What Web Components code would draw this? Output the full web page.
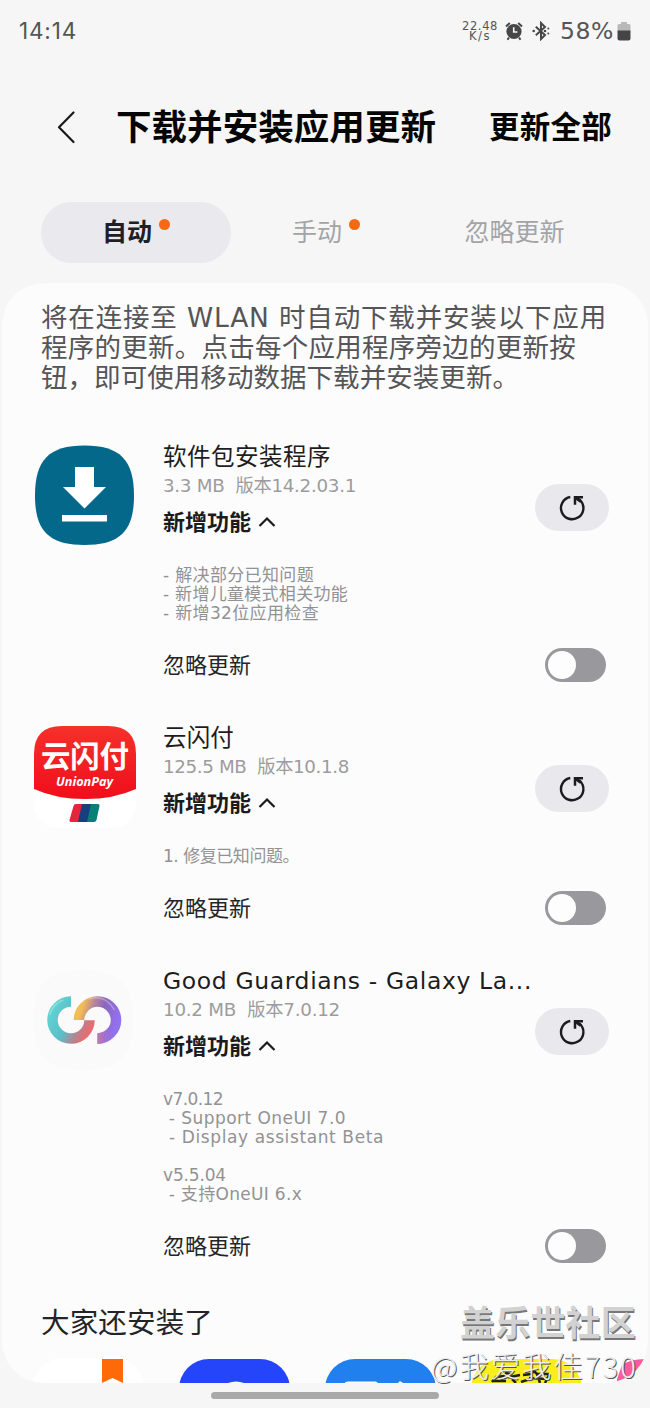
<!DOCTYPE html>
<html lang="zh-CN">
<head>
<meta charset="utf-8">
<title>下载并安装应用更新</title>
<style>
html,body{margin:0;background:#f6f6f6}
body{font-family:"DejaVu Sans","Noto Sans CJK SC",sans-serif;color:#1a1a1a}
</style>
</head>
<body>
<updates-screen></updates-screen>
<script>
const define = (name, html, ready) => customElements.define(name, class extends HTMLElement {
  connectedCallback() {
    if (this.shadowRoot) return;
    const root = this.attachShadow({mode: 'open'});
    const t = document.createElement('template');
    t.innerHTML = typeof html === 'function' ? html(this) : html;
    root.append(t.content.cloneNode(true));
    if (ready) ready(this, root);
  }
});

/* One line of text, tracked so that it takes exactly the width it is given. */
define('fit-text', '<style>:host{display:block;white-space:pre}span{display:inline-block;vertical-align:top}</style><span><slot></slot></span>', (el, root) => {
  const w = parseFloat(el.getAttribute('w'));
  const span = root.querySelector('span');
  const n = [...el.textContent].length;
  if (w && n > 1) span.style.letterSpacing = (w - span.getBoundingClientRect().width) / n + 'px';
});

define('status-bar', `<style>
:host{display:flex;height:62px;box-sizing:border-box;padding:0 19px 0 19px;align-items:center;color:#555}
.time{font-family:Inter,sans-serif;font-size:22.500px;margin-top:-2px;flex:1}
.net{font-size:11.500px;line-height:10px;width:36px;display:flex;flex-direction:column;align-items:center;margin-right:7px}
.pct{font-size:23.500px;margin-left:10px}
svg{display:block}
</style>
<fit-text class="time" w="58">14:14</fit-text>
<div class="net"><fit-text w="36">22.48</fit-text><fit-text w="22">K/s</fit-text></div>
<svg width="20" height="20" viewBox="0 0 20 20"><circle cx="9" cy="10.500" r="7.600" fill="#474747"/><path d="M1 5.500 4.800 2M17 5.500 13.200 2M4 16.500 2.500 18.800M14 16.500l1.500 2.300" stroke="#474747" stroke-width="2" fill="none"/><path d="M8.700 6.300v4.700h3.700" fill="none" stroke="#f6f6f6" stroke-width="1.600"/></svg>
<svg style="margin-left:7px" width="18" height="20" viewBox="0 0 18 20"><path d="M3.800 5.800 13 14 9 18V2L13 6 3.800 14.200" fill="none" stroke="#474747" stroke-width="2"/><circle cx="1.700" cy="10" r="1.300" fill="#474747"/><circle cx="13" cy="10" r="1.300" fill="#474747"/><circle cx="16.300" cy="7.500" r="1" fill="#474747"/><circle cx="16.300" cy="12.500" r="1" fill="#474747"/></svg>
<fit-text class="pct" w="54">58%</fit-text>
<svg style="margin-left:3px" width="14" height="20" viewBox="0 0 14 20"><path d="M4 1h6v2h2q1.500 0 1.500 1.500V10H.5V4.500Q.5 3 2 3h2z" fill="#b9b9b9"/><path d="M.5 9.500h13v8q0 2-2 2h-9q-2 0-2-2z" fill="#454545"/></svg>`);

define('title-bar', `<style>
:host{display:flex;height:130px;align-items:center;padding-left:56px;color:#050505;font-weight:700;font-family:"Noto Sans CJK SC",sans-serif}
.t{font-size:35.500px;margin:-6px 0 0 40px;width:373px}
.a{font-size:30.500px;margin-top:-4px}
svg{display:block}
</style>
<svg width="20" height="34" viewBox="0 0 20 34"><path d="M17.500 2.500 3 17.300 17.500 32" fill="none" stroke="#1a1a1c" stroke-width="2.200" stroke-linecap="round" stroke-linejoin="round"/></svg>
<fit-text class="t" w="320">下载并安装应用更新</fit-text><fit-text class="a" w="123">更新全部</fit-text>`);

define('tab-item', el => `<style>
:host{display:flex;flex:none;width:190px;height:61px;border-radius:31px;align-items:center;justify-content:center;font-family:"Noto Sans CJK SC",sans-serif;font-size:25px;line-height:36px;color:#a4a4a6}
:host([selected]){background:#e9e9ee;font-weight:700;color:#202024}
::slotted(fit-text){margin-top:-5px}
i{width:11px;height:11px;border-radius:50%;background:#f56a10;align-self:flex-start;margin:17px -1px 0 7px}
</style><slot></slot>${el.hasAttribute('dot') ? '<i></i>' : ''}`);

define('tab-strip', `<style>:host{display:flex;height:91px;box-sizing:border-box;padding:10px 0 0 40.500px}</style><slot></slot>`);

define('refresh-button', `<style>:host{display:flex;width:74px;height:47px;border-radius:24px;background:#e9e9ed;align-items:center;justify-content:center}svg{display:block}</style>
<svg width="28" height="28" viewBox="0 0 28 28"><path d="M12.300 3A11.200 11.200 0 1 0 22 6L18 4" fill="none" stroke="#1b1b20" stroke-width="2.400"/><path d="M17 10.800V3.300h8" fill="none" stroke="#1b1b20" stroke-width="2.500"/><path d="M17 3.300 22.800 7.500" stroke="#1b1b20" stroke-width="2.800"/></svg>`);

define('toggle-switch', `<style>:host{display:flex;width:61px;height:34px;border-radius:17px;background:#99999d;align-items:center;box-sizing:border-box;padding-left:3px}i{width:28px;height:28px;border-radius:50%;background:#fdfdfd}</style><i></i>`);

const icons = {
  installer: `<svg width="104" height="104" viewBox="1 0 104 104"><path d="M53.500 1.500C89 1.500 103 16 103 51.500S89 101 53.500 101 4 87 4 51.500 18 1.500 53.500 1.500z" fill="#04688a"/><path d="M44 23h19v20h12L53.500 64.500 32 43h12zM31 71h45v6.500H31z" fill="#fff"/></svg>`,
  union: `<svg width="104" height="104" viewBox="0 0 104 104"><defs><clipPath id="c"><path d="M30 1H76Q104 1 104 29V76Q104 103 76 103H30Q2 103 2 76V29Q2 1 30 1z"/></clipPath><linearGradient id="g" x2="0" y2="1"><stop stop-color="#f5312a"/><stop offset="1" stop-color="#f00e1c"/></linearGradient></defs><g clip-path="url(#c)"><path d="M0 0H104V104H0z" fill="#fff"/><path d="M0 0H106V63Q83 74 53 74T0 63z" fill="url(#g)"/></g><text x="9" y="42" font-size="29.500" font-weight="700" font-family="Noto Sans CJK SC,sans-serif" fill="#fff" textLength="88">云闪付</text><text x="24" y="61" font-size="12.800" font-style="italic" font-weight="700" font-family="Open Sans,sans-serif" fill="#fff" textLength="57" lengthAdjust="spacingAndGlyphs">UnionPay</text><path d="M44 79h7l-4 18h-8q-2 0-1.500-2l4-14q.5-2 2.500-2z" fill="#e3263c"/><path d="M50 79h10l-4 18h-10z" fill="#183f7c"/><path d="M59 79h7q2 0 1.500 2l-3 14q-.5 2-2.500 2h-7z" fill="#098077"/></svg>`,
  guardians: `<svg width="104" height="104" viewBox="1.500 0 104 104"><defs><linearGradient id="a" x1="0" y1=".2" x2="1" y2=".7"><stop stop-color="#60d2d2"/><stop offset=".48" stop-color="#5bbdc8"/><stop offset=".8" stop-color="#b88390"/><stop offset="1" stop-color="#e56e72"/></linearGradient><linearGradient id="b" x1="0" y1=".4" x2="1" y2=".7"><stop stop-color="#f4bd54"/><stop offset=".3" stop-color="#b4829e"/><stop offset=".55" stop-color="#8b67bd"/><stop offset="1" stop-color="#9370f0"/></linearGradient><linearGradient id="p" x2="1" y2="0"><stop stop-color="#c57aa9"/><stop offset="1" stop-color="#9370f0" stop-opacity="0"/></linearGradient></defs><path d="M53 2C89 2 103 16 103 52S89 102 53 102 3 88 3 52 17 2 53 2z" fill="#fafafa"/><path d="M40.500 33.500A18.500 18.500 0 1 0 59 52.200" fill="none" stroke="url(#a)" stroke-width="10.500"/><path d="M48.500 52A18.500 18.500 0 1 1 67 70.500" fill="none" stroke="url(#b)" stroke-width="10.500"/><path d="M67 65.200q7-1 10-5l7 8q-7 8-17 7.700z" fill="url(#p)"/><path d="M19 47q4-12 14-15M58 31q17-5 26 11" fill="none" stroke="#fff" stroke-opacity=".3" stroke-width="1.500"/></svg>`
};

define('app-icon', el => `<style>:host{display:block;width:104px;height:104px}svg{display:block}</style>${icons[el.getAttribute('kind')]}`);

define('app-update', el => {
  const a = k => el.getAttribute(k);
  return `<style>
:host{display:grid;grid-template-columns:130px 372px 74px;padding-left:31px;margin-bottom:41px;align-items:start}
.name{font-size:23.500px;line-height:30px;color:#1d1d1d}
.meta{font-size:18.300px;line-height:28px;color:#9c9c9e}
.feat{display:flex;align-items:center;height:44px;font:700 22px/32px "Noto Sans CJK SC",sans-serif;color:#1b1b1d}
.feat fit-text{margin-top:-4px}
.notes{font-size:17px;line-height:19px;color:#929294;margin:22px 0 25px;min-height:19px}
.ign{grid-column:2/4;display:flex;justify-content:space-between;align-items:center;height:34px;padding-right:3px;font:22px/32px "Noto Sans CJK SC",sans-serif;color:#252527}
.ign fit-text{margin-top:-4px}
.notes,.head{grid-column:2}
refresh-button{margin-top:42px}
app-icon{margin:2px 0 -30px -1px}
svg{display:block;margin-left:7px}
</style>
<app-icon kind="${a('icon')}"></app-icon>
<div class="head"><fit-text class="name" w="${a('nw')}">${a('name')}</fit-text><fit-text class="meta" w="${a('mw')}">${a('meta')}</fit-text>
<div class="feat"><fit-text w="88">新增功能</fit-text><svg width="18" height="12" viewBox="0 0 18 12"><path d="M1.500 10 9 2.500 16.500 10" fill="none" stroke="#1b1b1d" stroke-width="2.200"/></svg></div></div>
<refresh-button></refresh-button>
<div class="notes"><slot></slot></div>
<div class="ign"><fit-text w="88">忽略更新</fit-text><toggle-switch></toggle-switch></div>`;
});

define('more-apps', `<style>
:host{display:block}
h2{margin:0;font-size:28.500px;line-height:40px;font-weight:400;padding:0 0 14px 39px;color:#242426}
.row{display:flex;gap:35px;padding-left:31px;height:25px;overflow:hidden}
svg{display:block;flex:none}
</style>
<h2><fit-text w="172">大家还安装了</fit-text></h2>
<div class="row">
<svg width="111" height="25"><rect width="111" height="111" rx="30" fill="#fff"/><path d="M69 1h21v24l-10.500-5L69 25z" fill="#ff6a08"/></svg>
<svg width="111" height="25"><rect width="111" height="111" y="1" rx="30" fill="#2545fb"/><path d="M49 25q8-3 16 0z" fill="#fff"/></svg>
<svg width="111" height="25"><rect width="111" height="111" y="1" rx="30" fill="#1f80ee"/><path d="M20 25q0-1.500 3-1.500h28l2 1.500zM73 25l2-2 3 2z" fill="#fff"/></svg>
<svg width="111" height="25"><rect width="111" height="111" y="1" rx="30" fill="#f9ee1c"/><path d="M21 24l4-5 9-1 1-3 5 1-1 3 10-2M22 23h13M52 17l8-1 3-3 3 3 12 0M50 24l12-4M58 20l18 1M66 16l3 9M78 17l-4 8M41 21l4 4" fill="none" stroke="#211f16" stroke-width="2.500"/></svg>
<svg width="31" height="25"><rect width="111" height="111" rx="30" fill="#fff"/><path d="M-1 24 5 7Q13 1 28 1 24 10 14 18Z" fill="#ff5b9b"/></svg>
</div>`);

define('update-panel', `<style>:host{display:block;box-sizing:border-box;height:1100px;margin:0 2px;border-radius:42px;background:#fcfcfc;overflow:hidden;padding-top:20px}</style><slot></slot>`);

define('intro-text', `<style>:host{display:block;font-size:26.500px;line-height:30px;padding:0 0 0 39px;height:139px;color:#555557}</style>
<fit-text w="566">将在连接至 WLAN 时自动下载并安装以下应用</fit-text>
<fit-text w="535">程序的更新。点击每个应用程序旁边的更新按</fit-text>
<fit-text w="478">钮，即可使用移动数据下载并安装更新。</fit-text>`);

define('water-mark', `<style>:host{position:absolute;right:14px;top:1298px;display:flex;flex-direction:column;align-items:flex-end;font-family:"Noto Sans CJK SC",sans-serif;color:#d2d2d2}
.a{font-size:35px;line-height:46px;font-weight:700;text-shadow:1px 2px 0 #777}
.b{font-size:29px;line-height:43px;font-weight:300;color:#ededed;text-shadow:1px 1px 0 #555;margin-right:-2px}</style>
<fit-text class="a" w="176">盖乐世社区</fit-text><fit-text class="b" w="207">@我爱我佳730</fit-text>`);

define('updates-screen', `<style>
:host{display:block;position:relative;width:650px;height:1408px;overflow:hidden;background:#f6f6f6}
.home{width:228px;height:7px;border-radius:4px;background:#a9a9a9;margin:9px 0 0 211px}
</style>
<status-bar></status-bar>
<title-bar></title-bar>
<tab-strip><tab-item selected dot><fit-text w="50">自动</fit-text></tab-item><tab-item dot><fit-text w="50">手动</fit-text></tab-item><tab-item style="margin-left:-1px"><fit-text w="100">忽略更新</fit-text></tab-item></tab-strip>
<update-panel>
<intro-text></intro-text>
<app-update icon="installer" name="软件包安装程序" nw="168" meta="3.3 MB  版本14.2.03.1" mw="193">
<fit-text w="151">- 解决部分已知问题</fit-text><fit-text w="185">- 新增儿童模式相关功能</fit-text><fit-text w="156">- 新增32位应用检查</fit-text></app-update>
<app-update icon="union" name="云闪付" nw="71" meta="125.5 MB  版本10.1.8" mw="186"><fit-text w="136">1. 修复已知问题。</fit-text></app-update>
<app-update icon="guardians" name="Good Guardians - Galaxy La..." nw="369" meta="10.2 MB  版本7.0.12" mw="177">
<fit-text w="60">v7.0.12</fit-text><fit-text w="183"> - Support OneUI 7.0</fit-text><fit-text w="221"> - Display assistant Beta</fit-text><fit-text> </fit-text><fit-text w="63">v5.5.04</fit-text><fit-text w="139"> - 支持OneUI 6.x</fit-text></app-update>
<more-apps></more-apps>
</update-panel>
<div class="home"></div>
<water-mark></water-mark>`);
</script>
</body>
</html>
